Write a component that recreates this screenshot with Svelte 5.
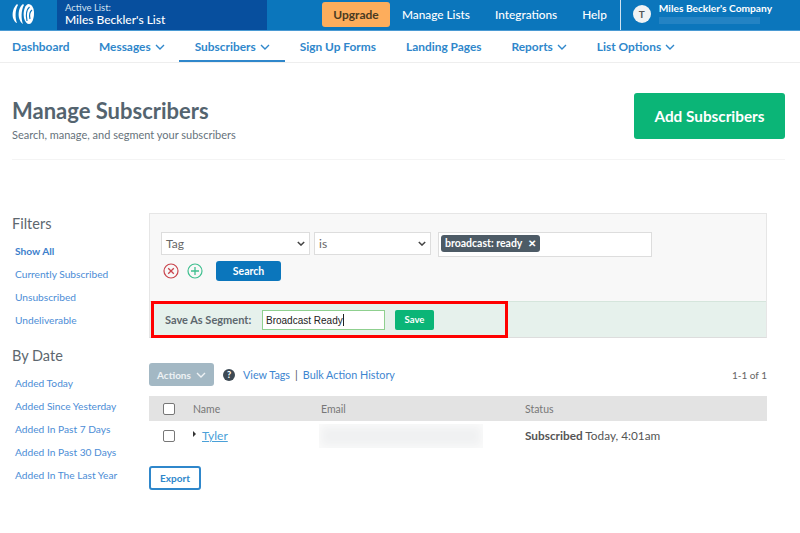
<script lang="ts">
  const topLinks = ['Manage Lists', 'Integrations', 'Help'];
  const navLinks = [
    { label: 'Dashboard', caret: false },
    { label: 'Messages', caret: true },
    { label: 'Subscribers', caret: true, active: true },
    { label: 'Sign Up Forms', caret: false },
    { label: 'Landing Pages', caret: false },
    { label: 'Reports', caret: true },
    { label: 'List Options', caret: true }
  ];
  const filters = ['Currently Subscribed', 'Unsubscribed', 'Undeliverable'];
  const dates = ['Added Today', 'Added Since Yesterday', 'Added In Past 7 Days', 'Added In Past 30 Days', 'Added In The Last Year'];
</script>

{#snippet caret()}
  <svg class="caret" viewBox="0 0 10 6" width="10" height="6"><path d="M1 1l4 4 4-4" fill="none" stroke="currentColor" stroke-width="1.4" /></svg>
{/snippet}

<div class="page">
  <header class="topbar">
    <div class="logo">
      <svg viewBox="0 0 24 24" width="24" height="24">
        <path d="M6 1C2 5 1 10 2 15c1 3 3 5 4 5C4 15 4 7 7 2z" fill="#fff" />
        <path d="M12 1C8 4 7 10 8 15c1 3 2 5 4 6C10 16 10 7 13 2z" fill="#fff" />
        <path d="M17 1c-4 2-5 9-4 14 1 4 3 6 5 6 3 0 5-5 5-11 0-5-2-9-6-9z" fill="#fff" />
        <path d="M18.5 4C15 7 15 13 16 18M21 7c-2.500 2-3 5-2 9" fill="none" stroke="#0b76bc" stroke-width="1.2" />
      </svg>
    </div>
    <div class="active-list">
      <span class="al-label">Active List:</span>
      <span class="al-name">Miles Beckler's List</span>
    </div>
    <div class="top-right">
      <button class="upgrade">Upgrade</button>
      <nav class="top-links">
        {#each topLinks as link}
          <a href="/">{link}</a>
        {/each}
      </nav>
      <div class="account">
        <span class="avatar">T</span>
        <div class="acc-text">
          <span class="acc-name">Miles Beckler's Company</span>
          <span class="acc-blur"></span>
        </div>
      </div>
    </div>
  </header>

  <nav class="mainnav">
    {#each navLinks as link}
      <a href="/" class:active={link.active}>
        {link.label}
        {#if link.caret}{@render caret()}{/if}
      </a>
    {/each}
  </nav>

  <section class="head">
    <div>
      <h1>Manage Subscribers</h1>
      <p>Search, manage, and segment your subscribers</p>
    </div>
    <button class="add">Add Subscribers</button>
  </section>

  <div class="content">
    <aside class="side">
      <h2>Filters</h2>
      <a href="/" class="strong">Show All</a>
      {#each filters as f}
        <a href="/">{f}</a>
      {/each}
      <h2 class="second">By Date</h2>
      {#each dates as d}
        <a href="/">{d}</a>
      {/each}
    </aside>

    <main class="main">
      <div class="panel">
        <div class="builder">
          <div class="row">
            <div class="select wide">Tag<svg viewBox="0 0 10 6" width="8" height="5"><path d="M1 1l4 4 4-4" fill="none" stroke="#444" stroke-width="1.8" /></svg></div>
            <div class="select">is<svg viewBox="0 0 10 6" width="8" height="5"><path d="M1 1l4 4 4-4" fill="none" stroke="#444" stroke-width="1.8" /></svg></div>
            <div class="tags"><span class="tag">broadcast: ready <b>✕</b></span></div>
          </div>
          <div class="row2">
            <svg viewBox="0 0 16 16" width="16" height="16"><circle cx="8" cy="8" r="7" fill="none" stroke="#c9444c" stroke-width="1.2" /><path d="M5.2 5.2l5.6 5.6M10.8 5.2l-5.600 5.600" stroke="#c9444c" stroke-width="1.3" /></svg>
            <svg viewBox="0 0 16 16" width="16" height="16"><circle cx="8" cy="8" r="7" fill="none" stroke="#3fbf8f" stroke-width="1.2" /><path d="M8 4v8M4 8h8" stroke="#3fbf8f" stroke-width="1.3" /></svg>
            <button class="search">Search</button>
          </div>
        </div>
        <div class="save-row">
          <div class="save-box">
            <span class="save-label">Save As Segment:</span>
            <div class="seg-input">Broadcast Ready<i></i></div>
            <button class="save">Save</button>
          </div>
        </div>
      </div>

      <div class="toolbar">
        <button class="actions">Actions {@render caret()}</button>
        <span class="help">?</span>
        <a href="/">View Tags</a>
        <span class="pipe">|</span>
        <a href="/">Bulk Action History</a>
        <span class="count">1-1 of 1</span>
      </div>

      <div class="table">
        <div class="tr th">
          <span class="c-check"><span class="check"></span></span>
          <span class="c-name">Name</span>
          <span class="c-email">Email</span>
          <span>Status</span>
        </div>
        <div class="tr td">
          <span class="c-check"><span class="check"></span></span>
          <span class="c-name"><span class="tri"></span><a href="/">Tyler</a></span>
          <span class="c-email"><span class="blur"></span></span>
          <span class="status"><b>Subscribed</b> Today, 4:01am</span>
        </div>
      </div>

      <button class="export">Export</button>
    </main>
  </div>
</div>

<style>
  :global(body) {
    margin: 0;
    background: #fff;
  }

  .page {
    width: 800px;
    height: 533px;
    overflow: hidden;
    font-family: Lato, "Open Sans", sans-serif;
    color: #4f5d66;
  }

  a {
    text-decoration: none;
    color: #3d85d0;
  }

  button {
    font-family: inherit;
    border: none;
    cursor: pointer;
  }

  .topbar {
    display: flex;
    height: 30px;
    background: #0b76bc;
    border-bottom: 1px solid #4a9ad3;
  }

  .logo {
    width: 57px;
    padding: 3px 0 0 11px;
    box-sizing: border-box;
  }

  .active-list {
    width: 210px;
    background: #074f9e;
    display: flex;
    flex-direction: column;
    padding: 2px 0 0 8px;
    box-sizing: border-box;
    color: #fff;
  }

  .al-label {
    font-size: 9.5px;
    line-height: 11px;
    color: #d5e2f0;
  }

  .al-name {
    font-size: 12px;
    line-height: 14px;
    font-weight: 500;
  }

  .top-right {
    display: flex;
    align-items: center;
    margin-left: 55px;
    flex: 1;
  }

  .upgrade {
    width: 68px;
    height: 25px;
    margin-top: -2px;
    background: #fdad5c;
    border-radius: 3px;
    color: #4a3b22;
    font-size: 12px;
    font-weight: 700;
    padding: 0;
  }

  .top-links {
    display: flex;
    gap: 25px;
    margin: -2px 0 0 12px;
  }

  .top-links a {
    color: #fff;
    font-size: 11.8px;
    font-weight: 500;
  }

  .account {
    display: flex;
    align-items: center;
    align-self: stretch;
    margin-left: 13px;
    padding-left: 12px;
    border-left: 1px solid #cfe3f2;
    flex: 1;
  }

  .avatar {
    width: 18px;
    height: 18px;
    margin-top: -2px;
    border-radius: 50%;
    background: #f1f3f4;
    color: #555;
    font-size: 10px;
    font-weight: 700;
    text-align: center;
    line-height: 18px;
  }

  .acc-text {
    display: flex;
    flex-direction: column;
    margin-left: 8px;
    margin-top: -5px;
  }

  .acc-name {
    color: #fff;
    font-size: 10.2px;
    line-height: 12px;
    font-weight: 700;
  }

  .acc-blur {
    display: block;
    width: 101px;
    height: 7px;
    margin-top: 3px;
    background: #2383c4;
  }

  .mainnav {
    display: flex;
    height: 32px;
    border-bottom: 1px solid #eee;
    box-sizing: border-box;
  }

  .mainnav a {
    display: flex;
    align-items: center;
    gap: 4px;
    padding: 2px 15px 0;
    height: 31px;
    box-sizing: border-box;
    border-bottom: 2px solid transparent;
    font-size: 11.9px;
    font-weight: 700;
    color: #2f87cb;
  }

  .mainnav a:first-child {
    padding-left: 12px;
    padding-right: 14.5px;
  }

  .mainnav a.active {
    border-bottom-color: #2f87cb;
    padding-left: 16px;
    padding-right: 15px;
    margin-left: -1px;
  }

  .head {
    display: flex;
    justify-content: space-between;
    margin: 30px 15px 0 12px;
    height: 66px;
    border-bottom: 1px solid #f4f4f4;
  }

  h1 {
    margin: 5px 0 0;
    font-size: 22px;
    line-height: 26px;
    font-weight: 700;
    color: #54646f;
  }

  .head p {
    margin: 4px 0 0;
    font-size: 11px;
    line-height: 14px;
    color: #66727b;
  }

  .add {
    width: 151px;
    height: 46px;
    background: #0bb577;
    color: #fff;
    font-size: 15.3px;
    font-weight: 700;
    border-radius: 3px;
    padding: 0;
  }

  .content {
    display: flex;
    margin-top: 53px;
    padding-left: 12px;
  }

  .side {
    width: 137px;
    flex: none;
    display: flex;
    flex-direction: column;
  }

  .side h2 {
    margin: 2px 0 7px;
    font-size: 14.5px;
    line-height: 18px;
    font-weight: 400;
    color: #5d676e;
  }

  .side h2.second {
    margin-top: 15px;
    margin-bottom: 7px;
  }

  .side a {
    padding-left: 3px;
    font-size: 10.2px;
    line-height: 23px;
    color: #4c8dd6;
  }

  .side a.strong {
    font-weight: 700;
    color: #3d80cc;
  }

  .main {
    width: 618px;
  }

  .panel {
    border: 1px solid #e6e6e6;
    border-bottom-color: #ddd;
    background: #f8f8f8;
    height: 125px;
    box-sizing: border-box;
  }

  .builder {
    height: 87px;
    padding: 18px 0 0 11px;
    box-sizing: border-box;
  }

  .row {
    display: flex;
    gap: 4px;
  }

  .select {
    width: 117px;
    height: 23px;
    box-sizing: border-box;
    border: 1px solid #ddd;
    background: #fff;
    display: flex;
    align-items: center;
    justify-content: space-between;
    padding: 0 4px;
    font-size: 12px;
    color: #666;
  }

  .select.wide {
    width: 149px;
  }

  .tags {
    display: flex;
    align-items: flex-start;
    width: 214px;
    height: 25px;
    box-sizing: border-box;
    border: 1px solid #ddd;
    background: #fff;
    margin-left: 3px;
    padding: 2px;
  }

  .tag {
    height: 17px;
    line-height: 16px;
    padding: 0 4px;
    background: #4d5b66;
    color: #fff;
    border-radius: 3px;
    font-size: 10.5px;
    font-weight: 700;
    white-space: nowrap;
  }

  .tag b {
    margin-left: 3px;
    font-size: 9.5px;
  }

  .row2 {
    display: flex;
    align-items: center;
    gap: 8px;
    margin-top: 4px;
    padding-left: 2px;
  }

  .search {
    width: 65px;
    height: 20px;
    margin-left: 5px;
    background: #0b76bc;
    color: #fff;
    border-radius: 3px;
    font-size: 10.5px;
    font-weight: 700;
    padding: 0;
  }

  .save-row {
    height: 36px;
    background: #e6f1ec;
    border-top: 1px solid #d5e5dc;
    box-sizing: border-box;
  }

  .save-box {
    width: 357px;
    height: 37px;
    box-sizing: border-box;
    margin: -1px 0 0 1px;
    border: 3px solid #f00;
    display: flex;
    align-items: center;
    padding-left: 11px;
  }

  .save-label {
    font-size: 11px;
    font-weight: 700;
    color: #5d676e;
    width: 97px;
  }

  .seg-input {
    width: 123px;
    height: 20px;
    box-sizing: border-box;
    border: 1px solid #8fd08f;
    background: #fff;
    font-family: "Liberation Sans", sans-serif;
    font-size: 10px;
    line-height: 19px;
    padding-left: 3px;
    color: #222;
  }

  .seg-input i {
    display: inline-block;
    width: 1px;
    height: 12px;
    background: #222;
    vertical-align: -2px;
  }

  .save {
    width: 39px;
    height: 20px;
    margin-left: 10px;
    background: #0bb577;
    color: #fff;
    font-size: 9.5px;
    font-weight: 700;
    border-radius: 2px;
    padding: 0;
  }

  .toolbar {
    display: flex;
    align-items: center;
    height: 23px;
    margin-top: 25px;
    font-size: 10.8px;
  }

  .actions {
    display: flex;
    align-items: center;
    justify-content: center;
    gap: 5px;
    width: 65px;
    height: 23px;
    padding: 0;
    background: #a3b8c4;
    color: #eef2f4;
    border-radius: 3px;
    font-size: 10px;
    font-weight: 700;
  }

  .help {
    width: 12px;
    height: 12px;
    margin: 0 8px 0 9px;
    border-radius: 50%;
    background: #3d4a54;
    color: #fff;
    font-size: 9px;
    font-weight: 900;
    text-align: center;
    line-height: 12px;
  }

  .pipe {
    margin: 0 5px;
    color: #555;
  }

  .count {
    margin-left: auto;
    color: #666;
    font-size: 10px;
  }

  .table {
    margin-top: 10px;
    font-size: 10.5px;
  }

  .tr {
    display: flex;
    align-items: center;
  }

  .th {
    height: 25px;
    background: #e3e3e3;
    color: #777;
  }

  .td {
    height: 29px;
    color: #555;
  }

  .c-check {
    width: 44px;
    padding-left: 14px;
    box-sizing: border-box;
    display: flex;
  }

  .check {
    width: 10px;
    height: 10px;
    border: 1px solid #777;
    border-radius: 2px;
    background: #fff;
  }

  .c-name {
    width: 128px;
    display: flex;
    align-items: center;
  }

  .tri {
    width: 0;
    height: 0;
    margin-right: 6px;
    margin-top: -4px;
    border-left: 3px solid #333;
    border-top: 3px solid transparent;
    border-bottom: 3px solid transparent;
  }

  .c-name a {
    font-size: 12px;
    color: #4aa0d8;
    text-decoration: underline;
  }

  .c-email {
    width: 204px;
    display: flex;
  }

  .blur {
    width: 164px;
    height: 24px;
    margin-left: -2px;
    background: #f0f1f2;
    box-shadow: inset 0 0 8px 2px #fbfbfb;
  }

  .status {
    font-size: 11.8px;
  }

  .td b {
    font-weight: 700;
  }

  .export {
    display: block;
    width: 52px;
    height: 24px;
    margin-top: 16px;
    background: #fff;
    border: 2px solid #2f87cb;
    border-radius: 3px;
    color: #2f87cb;
    font-size: 10px;
    font-weight: 700;
    padding: 0;
  }

  .caret {
    display: block;
  }
</style>
